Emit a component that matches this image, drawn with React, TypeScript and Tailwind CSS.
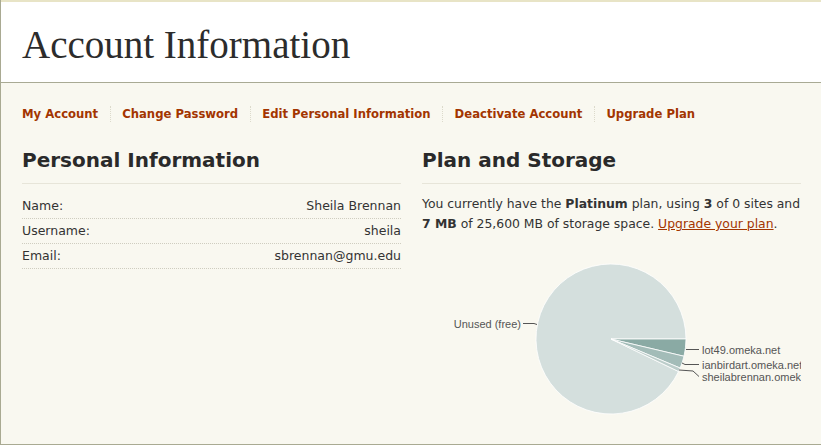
import React from "react";

const navItems = [
  "My Account",
  "Change Password",
  "Edit Personal Information",
  "Deactivate Account",
  "Upgrade Plan",
];

const rows = [
  ["Name:", "Sheila Brennan"],
  ["Username:", "sheila"],
  ["Email:", "sbrennan@gmu.edu"],
];

function Pie() {
  const cx = 189;
  const cy = 99;
  const r = 75;
  const pt = (deg: number) => {
    const a = (deg * Math.PI) / 180;
    return `${(cx + r * Math.cos(a)).toFixed(2)} ${(cy + r * Math.sin(a)).toFixed(2)}`;
  };
  const slice = (a0: number, a1: number) => {
    const large = a1 - a0 > 180 ? 1 : 0;
    return `M ${cx} ${cy} L ${pt(a0)} A ${r} ${r} 0 ${large} 1 ${pt(a1)} Z`;
  };
  return (
    <svg width="379" height="200" viewBox="0 0 379 200" className="block overflow-hidden">
      <path d={slice(25.7, 360)} fill="#d4dfdd" stroke="#ffffff" strokeWidth="0.8" />
      <path d={slice(0, 13.3)} fill="#8aaaa4" stroke="#ffffff" strokeWidth="0.8" />
      <path d={slice(13.3, 22.8)} fill="#a3bcb8" stroke="#ffffff" strokeWidth="0.8" />
      <path d={slice(22.8, 25.7)} fill="#bccdca" stroke="#ffffff" strokeWidth="0.8" />
      <g stroke="#555555" strokeWidth="1" fill="none">
        <path d="M 101 83.5 L 112 83.5 L 115 84.5" />
        <path d="M 264 109.5 L 277 109.5" />
        <path d="M 260 123 L 263 124.5 L 277 124.5" />
        <path d="M 257 130 L 271 131 L 277 136.5" />
      </g>
      <g fill="#555555" fontFamily="'Liberation Sans', Arial, sans-serif" fontSize="11">
        <text x="99" y="87.5" textAnchor="end">Unused (free)</text>
        <text x="280" y="113.5">lot49.omeka.net</text>
        <text x="280" y="129">ianbirdart.omeka.net</text>
        <text x="280" y="141">sheilabrennan.omeka.net</text>
      </g>
    </svg>
  );
}

export default function App() {
  return (
    <div
      className="w-[821px] h-[445px] overflow-hidden border-l border-b border-[#a9aa92] bg-[#f9f8f0] text-[#333333]"
      style={{ fontFamily: "'DejaVu Sans', Verdana, sans-serif" }}
    >
      <div className="h-[83px] bg-white border-t-2 border-[#e8e4c6] border-b border-b-[#a9aa94] pl-[21px]">
        <h1 className="pt-[21px] text-[39px] leading-[44px] text-[#2c2c2c] font-['Liberation_Serif',serif]">
          Account Information
        </h1>
      </div>
      <div className="pl-[21px] pr-[19px] pt-[23px]">
        <nav className="flex items-center h-[16px]">
          {navItems.map((item, i) => (
            <React.Fragment key={item}>
              {i > 0 && <span className="h-[16px] border-l border-dotted border-[#dcdacb] mx-[11.5px]" />}
              <a className="text-[11.65px] leading-[16px] font-bold text-[#a33500]">{item}</a>
            </React.Fragment>
          ))}
        </nav>
        <div className="flex gap-[21px] mt-[26px]">
          <div className="w-[379px]">
            <h2 className="text-[20px] leading-[24px] font-bold text-[#2a2a2a] pb-[11px] border-b border-[#e7e5d9]">
              Personal Information
            </h2>
            <div className="mt-[10px]">
              {rows.map(([k, v]) => (
                <div
                  key={k}
                  className="flex justify-between items-center h-[25px] border-b border-dotted border-[#cfcdc0] text-[12.5px]"
                >
                  <span>{k}</span>
                  <span>{v}</span>
                </div>
              ))}
            </div>
          </div>
          <div className="w-[379px]">
            <h2 className="text-[20px] leading-[24px] font-bold text-[#2a2a2a] pb-[11px] border-b border-[#e7e5d9]">
              Plan and Storage
            </h2>
            <p className="mt-[10px] text-[12.4px] leading-[20px] whitespace-nowrap">
              You currently have the <b>Platinum</b> plan, using <b>3</b> of 0 sites and
              <br />
              <b>7 MB</b> of 25,600 MB of storage space.{" "}
              <a className="underline text-[#a33500]">Upgrade your plan</a>.
            </p>
            <div className="mt-[6px]">
              <Pie />
            </div>
          </div>
        </div>
      </div>
    </div>
  );
}
